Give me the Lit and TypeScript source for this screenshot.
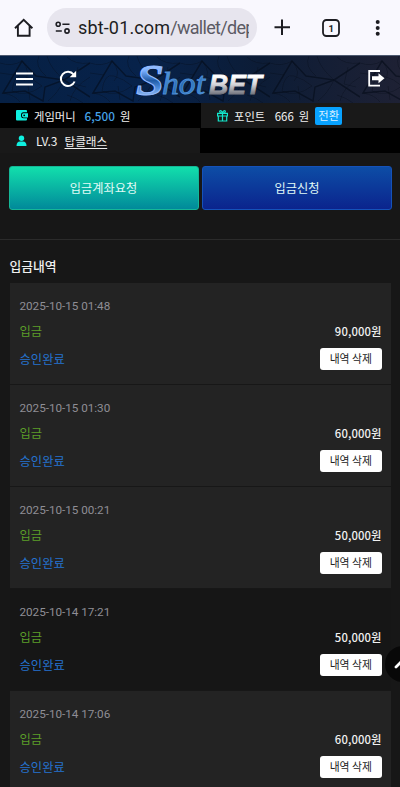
import { LitElement, html, css, svg } from "lit";
import { customElement, property } from "lit/decorators.js";

interface Deposit {
  date: string;
  amount: string;
  dark?: boolean;
}

const deposits: Deposit[] = [
  { date: "2025-10-15 01:48", amount: "90,000원" },
  { date: "2025-10-15 01:30", amount: "60,000원" },
  { date: "2025-10-15 00:21", amount: "50,000원" },
  { date: "2025-10-14 17:21", amount: "50,000원", dark: true },
  { date: "2025-10-14 17:06", amount: "60,000원" },
];

@customElement("browser-bar")
class BrowserBar extends LitElement {
  static styles = css`
    :host {
      display: flex;
      align-items: center;
      height: 55px;
      background: #f9f8fe;
      color: #1d1d22;
      font-family: Roboto, "Noto Sans", sans-serif;
    }
    svg { display: block; flex: none; }
    .home { margin-left: 14px; }
    .pill {
      display: flex;
      align-items: center;
      width: 210px;
      height: 39px;
      margin-left: 13px;
      border-radius: 20px;
      background: #e7e5ee;
      box-sizing: border-box;
      padding-left: 8px;
    }
    .url {
      width: 171px;
      margin-left: 7px;
      overflow: hidden;
      white-space: nowrap;
      font-size: 18px;
      line-height: 26px;
      letter-spacing: 0.15px;
    }
    .path { color: #5b5a64; letter-spacing: -0.7px; }
    .plus { margin-left: 17px; }
    .tabs { margin-left: 31px; }
    .more { margin-left: 33px; }
  `;
  render() {
    return html`
      <svg class="home" width="20" height="20" viewBox="0 0 20 20" fill="none" stroke="#1d1d22" stroke-width="1.9">
        <path d="M1 10.2 9.7 1.8l8.7 8.4M3.9 8v9.7h11.7V8" />
      </svg>
      <div class="pill">
        <svg width="16" height="14" viewBox="0 0 16 14" fill="none" stroke="#1d1d22" stroke-width="1.6">
          <circle cx="3.2" cy="3.3" r="2" /><path d="M7.4 3.3H14.5M.8 10h6" /><circle cx="12" cy="10" r="2.1" />
        </svg>
        <div class="url">sbt-01.com<span class="path">/wallet/dep</span></div>
      </div>
      <svg class="plus" width="17" height="17" viewBox="0 0 17 17" stroke="#1d1d22" stroke-width="2">
        <path d="M8 .5v15.5M.5 8.2H16" />
      </svg>
      <svg class="tabs" width="18" height="18" viewBox="0 0 18 18">
        <rect x="1" y="1" width="16" height="16" rx="3.4" fill="none" stroke="#1d1d22" stroke-width="1.8" />
        <text x="9.2" y="12.6" text-anchor="middle" font-family="Roboto, sans-serif" font-weight="700" font-size="9.5" fill="#1d1d22">1</text>
      </svg>
      <svg class="more" width="8" height="18" viewBox="0 0 8 18" fill="#1d1d22">
        <circle cx="4.7" cy="3" r="2" /><circle cx="4.7" cy="9" r="2" /><circle cx="4.7" cy="14.7" r="2" />
      </svg>
    `;
  }
}

@customElement("site-header")
class SiteHeader extends LitElement {
  static styles = css`
    :host { display: grid; height: 48px; background: #071631; overflow: hidden; }
    .bg, .bar { grid-area: 1 / 1; }
    svg { display: block; flex: none; }
    .bar { display: flex; align-items: center; z-index: 1; }
    .menu { margin-left: 16px; }
    .reload { margin-left: 26px; }
    .logo { margin-left: 58px; }
    .exit { margin-left: 101px; margin-bottom: 2px; }
  `;
  render() {
    return html`
      <svg class="bg" width="400" height="48" viewBox="0 0 400 48">
        <defs>
          <linearGradient id="sky">
            <stop offset="0" stop-color="#062044" /><stop offset=".35" stop-color="#07224a" />
            <stop offset=".65" stop-color="#0c1c36" /><stop offset="1" stop-color="#1e2134" />
          </linearGradient>
          <pattern id="web" width="90" height="48" patternUnits="userSpaceOnUse">
            <g fill="none" stroke="#020916" stroke-opacity=".55">
              <path stroke-width="1.5" d="M3 38 22 6l14 15 28 4-19 7-2 14-18-10zM64 25 90 8M64 25l26 17" />
              <path stroke-width=".6" d="M12 36q2-18 12-15t18 10q-16 12-30 5M22 6q10 12 2 20M47 1q3 12 17 24M67 2q8 8 23 6M48 46q10-8 16-21M0 8q12 4 22-2M0 18l14 2M70 46q3-14 20-24M39 1q-5 10 7 20M67 40q10 3 16 8M78 12l-4 17 12 3M30 45l-2-14M3 38q12 2 17 9" />
            </g>
          </pattern>
        </defs>
        <rect width="400" height="48" fill="url(#sky)" />
        <rect width="400" height="48" fill="url(#web)" />
        <rect width="400" height="1" fill="#4e5a70" />
      </svg>
      <div class="bar">
        <svg class="menu" width="17" height="15" viewBox="0 0 17 15" stroke="#fff" stroke-width="2">
          <path d="M0 1.500h17M0 7h17M0 12.500h17" />
        </svg>
        <svg class="reload" width="18" height="18" viewBox="0 0 18 18">
          <path d="M14.6 4.500A7.1 7.1 0 1 0 15.6 11.500" fill="none" stroke="#fff" stroke-width="2" />
          <path d="M17.2 .8v6.500h-6.5z" fill="#fff" />
        </svg>
        <svg class="logo" width="132" height="48" viewBox="0 0 132 48">
          <defs>
            <linearGradient id="ice" x1="0" y1="0" x2="0" y2="1">
              <stop offset="0" stop-color="#dceaff" /><stop offset=".3" stop-color="#79afff" />
              <stop offset=".5" stop-color="#215ca7" /><stop offset=".65" stop-color="#4b8cdc" />
              <stop offset="1" stop-color="#e0e9ff" />
            </linearGradient>
            <linearGradient id="ocean" x1="0" y1="0" x2="1" y2="1">
              <stop offset="0" stop-color="#63a5e9" /><stop offset=".5" stop-color="#286cb2" />
              <stop offset="1" stop-color="#4b9be7" />
            </linearGradient>
            <linearGradient id="steel" x1="0" y1="0" x2="0" y2="1">
              <stop offset=".25" stop-color="#fff" /><stop offset=".5" stop-color="#d4d4d8" />
              <stop offset=".8" stop-color="#777982" />
            </linearGradient>
          </defs>
          ${svg`
            <g font-family="'Liberation Serif', serif" font-style="italic">
              <text x="1" y="40" font-size="44" font-weight="700" textLength="28" lengthAdjust="spacingAndGlyphs" fill="url(#ice)" stroke="#93baff" stroke-width="1">S</text>
              <text x="27" y="38.500" font-size="31" textLength="43" lengthAdjust="spacingAndGlyphs" fill="url(#ocean)" stroke="#4d8ed6" stroke-width=".8">hot</text>
            </g>
            <text x="74" y="39" font-family="'Liberation Sans', sans-serif" font-style="italic" font-weight="700" font-size="27.500" textLength="53" lengthAdjust="spacingAndGlyphs" fill="url(#steel)" stroke="url(#steel)" stroke-width=".8">BET</text>
          `}
        </svg>
        <svg class="exit" width="17" height="17" viewBox="0 0 17 17">
          <path d="M12 1H1.2v14.7H12" fill="none" stroke="#fff" stroke-width="1.8" />
          <path d="M4 6.2h6.5V3.2l6 5-6 5v-3H4z" fill="#fff" />
        </svg>
      </div>
    `;
  }
}

@customElement("deposit-row")
class DepositRow extends LitElement {
  @property() date = "";
  @property() amount = "";
  static styles = css`
    :host {
      display: block;
      height: 102px;
      box-sizing: border-box;
      padding: 13px 9.5px 0 10px;
      border-bottom: 1px solid #171717;
      background: #232323;
      font-family: "Noto Sans CJK KR", sans-serif;
    }
    :host([dark]) { background: #161616; }
    .date { font: 11.7px/20px Roboto, sans-serif; color: #8f8e95; letter-spacing: -0.02px; height: 20px; }
    .line { display: flex; justify-content: space-between; align-items: center; }
    .kind-line { height: 24px; margin-top: 2.5px; }
    .state-line { height: 22px; margin-top: 5px; }
    .kind { color: #5c9d29; font-size: 12.3px; }
    .amount { color: #f1f1f1; font-size: 11.3px; font-weight: 500; letter-spacing: 0.1px; }
    .state { color: #2573cf; font-size: 12.3px; }
    .remove {
      width: 61.5px;
      height: 22px;
      padding: 0 0 2px;
      border: 0;
      border-radius: 3px;
      background: #fff;
      color: #222;
      font: 10.8px/20px "Noto Sans CJK KR", sans-serif;
    }
  `;
  render() {
    return html`
      <div class="date">${this.date}</div>
      <div class="line kind-line"><span class="kind">입금</span><span class="amount">${this.amount}</span></div>
      <div class="line state-line"><span class="state">승인완료</span><button class="remove">내역 삭제</button></div>
    `;
  }
}

@customElement("app-root")
class AppRoot extends LitElement {
  static styles = css`
    :host {
      display: block;
      position: relative;
      width: 400px;
      height: 787px;
      overflow: hidden;
      background: #171717;
      color: #f0f0f0;
      font-family: "Noto Sans CJK KR", sans-serif;
    }
    .info { display: grid; grid-template-columns: 200px 200px; grid-template-rows: 25px 25px; background: #000; font-size: 11.3px; }
    .cell { display: flex; align-items: center; padding-left: 16px; line-height: 22px; white-space: nowrap; }
    .gray { background: #191919; }
    .point { margin-left: 1px; padding-left: 16px; }
    .cell svg { display: block; flex: none; }
    .label { margin-left: 6px; }
    .money { margin-left: 9px; color: #46a2e6; font-weight: 500; font-size: 11.8px; }
    .unit { margin-left: 5px; }
    .score { margin-left: 9.5px; font-size: 11.5px; }
    .swap { margin-left: 6px; width: 27px; height: 18px; line-height: 17px; text-align: center; border-radius: 2px; background: #08a2ff; color: #d9efff; }
    .level { margin-left: 9px; font-size: 12px; }
    .grade { margin-left: 7px; font-size: 11.6px; text-decoration: underline; text-underline-offset: 2px; }
    .actions { display: grid; grid-template-columns: 190px 190px; gap: 3.5px; padding: 13px 8.5px 0; }
    .action { height: 44px; border-radius: 3px; font: 12.2px/40px "Noto Sans CJK KR", sans-serif; color: #e2fbf7; padding: 0 0 1px; }
    .account { border: 1px solid #15b797; background: linear-gradient(#12dfac, #01899a); }
    .request { border: 1px solid #1552b9; background: linear-gradient(#0d4da6, #0b248d); }
    .rule { height: 1px; margin-top: 29px; background: #2b2b2b; }
    .title { margin: 14px 0 0 9.5px; height: 29px; font-size: 12.8px; line-height: 24px; font-weight: 500; }
    .list { margin: 0 9px 0 9.5px; }
    .top { position: absolute; left: 385px; top: 646px; width: 36px; height: 36px; border-radius: 50%; background: #080808; }
    .top svg { display: block; }
  `;
  render() {
    return html`
      <browser-bar></browser-bar>
      <site-header></site-header>
      <div class="info">
        <div class="cell">
          <svg width="12" height="11" viewBox="0 0 12 11">
            <path d="M1 0h9q1 0 1 1v1.3H7.3Q5 2.300 5 5.300T7.300 8.300H11V9.500q0 1-1 1H1q-1 0-1-1V1q0-1 1-1z" fill="#0ff0e0" />
            <path d="M7.400 3.200H12v4.200H7.400q-1.500 0-1.500-2.100t1.500-2.100z" fill="#0ff0e0" /><circle cx="8.200" cy="5.300" r=".9" fill="#000" />
          </svg>
          <span class="label">게임머니</span><span class="money">6,500</span><span class="unit">원</span>
        </div>
        <div class="cell gray point">
          <svg width="11" height="12" viewBox="0 0 11 12" fill="none" stroke="#13e7cc" stroke-width="1.200">
            <path d="M.6 3.300h9.800v2.700H.6zM1.300 6v5h8.400V6M5.500 3.300V11M5.500 3.200C2 3 2.200.7 3.500.7s2 2.500 2 2.500.7-2.500 2-2.500S9 3 5.500 3.200" />
          </svg>
          <span class="label">포인트</span><span class="score">666</span><span class="unit">원</span><span class="swap">전환</span>
        </div>
        <div class="cell gray">
          <svg width="11" height="12" viewBox="0 0 11 12" fill="#0ff0e0">
            <circle cx="5.500" cy="3.200" r="2.700" /><path d="M.5 11q0-4.500 3.500-4.500h3q3.500 0 3.500 4.500z" />
          </svg>
          <span class="level">LV.3</span><span class="grade">탑클래스</span>
        </div>
      </div>
      <div class="actions">
        <button class="action account">입금계좌요청</button>
        <button class="action request">입금신청</button>
      </div>
      <div class="rule"></div>
      <div class="title">입금내역</div>
      <div class="list">
        ${deposits.map((d) => html`<deposit-row .date=${d.date} .amount=${d.amount} ?dark=${d.dark}></deposit-row>`)}
      </div>
      <div class="top">
        <svg width="36" height="36" viewBox="0 0 36 36" fill="none" stroke="#fff" stroke-width="2.800" stroke-linecap="round">
          <path d="M11 21l7-7 7 7" />
        </svg>
      </div>
    `;
  }
}
